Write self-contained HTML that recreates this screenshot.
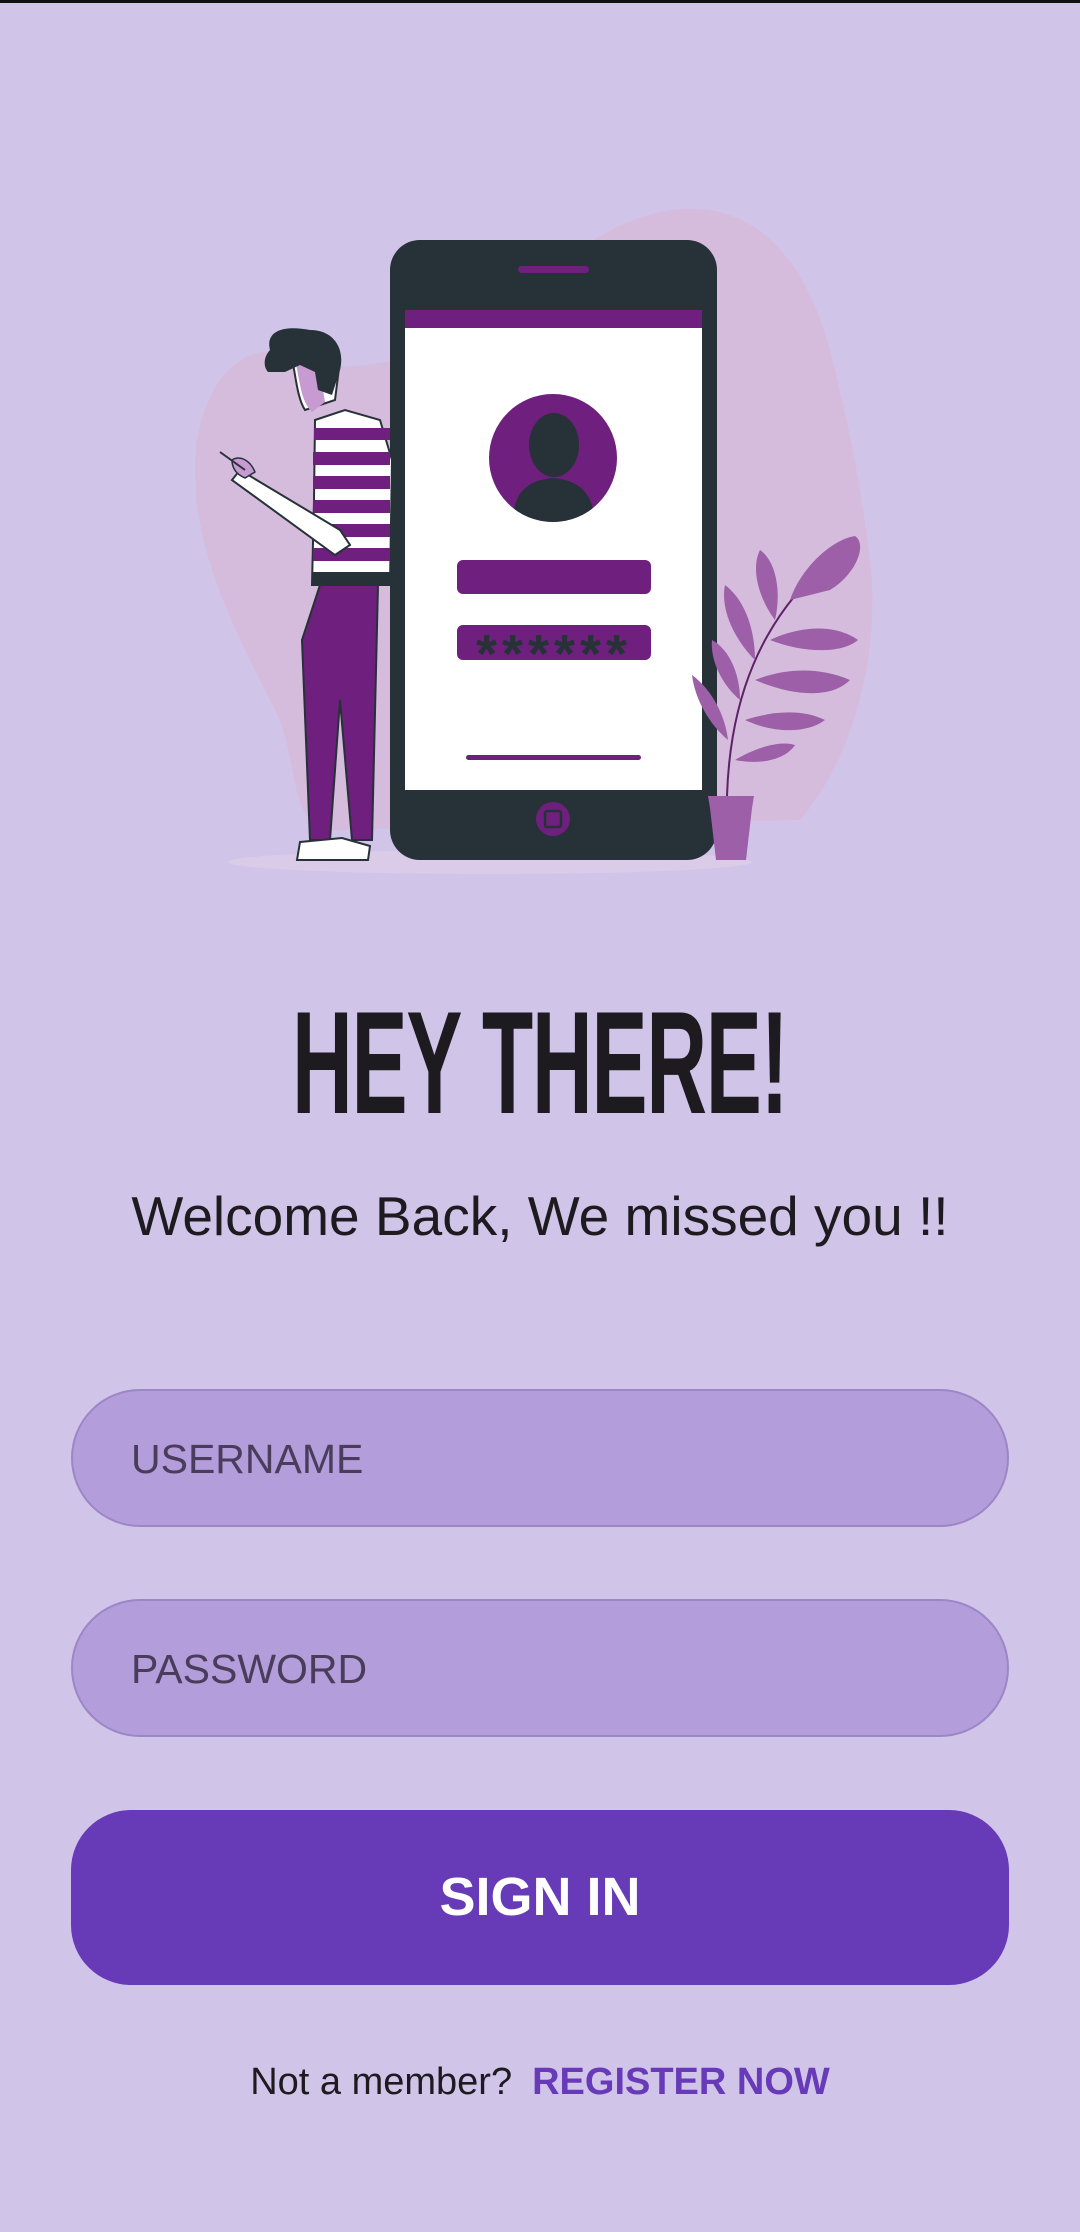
<!DOCTYPE html>
<html><head><meta charset="utf-8"><style>
html,body{margin:0;padding:0;}
body{width:1080px;height:2232px;background:#D1C4E9;position:relative;overflow:hidden;font-family:"Liberation Sans",sans-serif;}
.topbar{position:absolute;left:0;top:0;width:1080px;height:3px;background:#111;}
.title{position:absolute;left:0;width:1080px;top:990px;text-align:center;font-weight:bold;font-size:146px;line-height:146px;color:#1d1b20;}
.title span{display:inline-block;transform:scaleX(0.575);transform-origin:center;letter-spacing:-2px;}
.sub{position:absolute;left:0;width:1080px;top:1183px;text-align:center;font-size:55px;line-height:66px;color:#1d1b20;}
.field{position:absolute;left:71px;width:938px;height:138px;border:2px solid #9D86C6;border-radius:69px;background:#B39DDB;box-sizing:border-box;}
.field span{position:absolute;left:58px;top:46px;font-size:41px;line-height:44px;color:#4a3d5c;}
.btn{position:absolute;left:71px;top:1810px;width:938px;height:175px;border-radius:60px;background:#673AB7;color:#fff;text-align:center;font-weight:bold;font-size:54px;line-height:175px;}
.foot{position:absolute;left:0;width:1080px;top:2060px;text-align:center;font-size:38px;line-height:44px;color:#1d1b20;}
.foot b{color:#673AB7;margin-left:20px;}
</style></head><body>
<div class="topbar"></div>
<svg style="position:absolute;left:0;top:0" width="1080" height="900" viewBox="0 0 1080 900">
  <path d="M300 360 C250 330 195 380 195 470 C195 560 240 640 280 720 C300 780 290 820 330 830 L800 820 C860 750 880 640 870 560 C860 480 850 430 830 350 C800 240 740 200 670 210 C610 220 560 260 520 300 C460 350 360 380 300 360 Z" fill="#D5BCDC"/>
  <ellipse cx="490" cy="862" rx="262" ry="12" fill="#DACBE8"/>
  <rect x="390" y="240" width="327" height="620" rx="30" fill="#263238"/>
  <rect x="518" y="266" width="71" height="7" rx="3.5" fill="#6F1F7D"/>
  <rect x="405" y="310" width="297" height="480" fill="#fff"/>
  <rect x="405" y="310" width="297" height="18" fill="#6F1F7D"/>
  <circle cx="553" cy="458" r="64" fill="#6F1F7D"/>
  <clipPath id="cc"><circle cx="553" cy="458" r="64"/></clipPath>
  <g clip-path="url(#cc)" fill="#263238">
    <ellipse cx="554" cy="445" rx="25" ry="32"/>
    <path d="M513 522 C513 490 530 480 553 478 C576 480 593 490 595 522 Z"/>
  </g>
  <rect x="457" y="560" width="194" height="34" rx="6" fill="#6F1F7D"/>
  <rect x="457" y="625" width="194" height="35" rx="6" fill="#6F1F7D"/>
  <text x="554" y="672" text-anchor="middle" font-family="Liberation Sans" font-weight="bold" font-size="54" fill="#263238" letter-spacing="5">******</text>
  <rect x="466" y="755" width="175" height="5" rx="2.5" fill="#6F1F7D"/>
  <circle cx="553" cy="819" r="17" fill="#6F1F7D"/>
  <rect x="545" y="811" width="16" height="16" rx="2" fill="none" stroke="#263238" stroke-width="2.5"/>
  <g fill="#9C5FA8">
    <path d="M708 796 L754 796 L752 808 L746 860 L716 860 L710 808 Z"/>
    <path d="M727 796 C730 700 760 620 830 560" stroke="#5c2266" stroke-width="2" fill="none"/>
    <path d="M790 600 C800 570 830 540 855 536 C868 545 855 575 830 590 Z"/>
    <path d="M770 640 C790 630 830 620 858 640 C840 655 800 652 770 640 Z"/>
    <path d="M755 680 C780 670 815 665 850 680 C830 700 790 695 755 680 Z"/>
    <path d="M745 720 C770 712 800 708 825 720 C805 735 770 732 745 720 Z"/>
    <path d="M735 760 C755 748 780 740 795 745 C785 760 760 765 735 760 Z"/>
    <path d="M775 620 C760 600 750 570 760 550 C775 560 782 590 775 620 Z"/>
    <path d="M755 660 C735 640 720 610 725 585 C745 600 755 630 755 660 Z"/>
    <path d="M740 700 C722 685 710 660 712 640 C730 650 740 675 740 700 Z"/>
    <path d="M728 740 C710 725 695 700 692 675 C712 690 725 715 728 740 Z"/>
  </g>
  <path d="M320 585 L378 585 L372 840 L352 840 L340 700 L330 840 L310 840 L302 640 Z" fill="#6F1F7D" stroke="#263238" stroke-width="2"/>
  <path d="M300 842 L342 838 L370 846 L368 860 L297 860 Z" fill="#fff" stroke="#263238" stroke-width="2"/>
  <path d="M315 420 L345 410 L380 420 L392 460 L390 585 L312 585 L314 500 Z" fill="#fff" stroke="#263238" stroke-width="2"/>
  <g fill="#6F1F7D">
    <rect x="314" y="428" width="76" height="12"/>
    <rect x="313" y="452" width="77" height="13"/>
    <rect x="313" y="476" width="77" height="13"/>
    <rect x="313" y="500" width="77" height="13"/>
    <rect x="313" y="524" width="77" height="13"/>
    <rect x="313" y="548" width="77" height="13"/>
  </g>
  <rect x="312" y="572" width="78" height="13" fill="#263238"/>
  <path d="M240 470 L340 530 L350 545 L335 555 L232 480 Z" fill="#fff" stroke="#263238" stroke-width="2"/>
  <path d="M232 460 C240 455 250 460 255 472 L245 478 C238 475 232 470 232 460 Z" fill="#C79BD2" stroke="#263238" stroke-width="1.5"/>
  <line x1="220" y1="452" x2="245" y2="470" stroke="#263238" stroke-width="2"/>
  <path d="M288 345 C295 360 295 395 305 410 L335 400 L340 360 Z" fill="#fff" stroke="#263238" stroke-width="2"/>
  <path d="M295 360 C300 380 300 400 312 412 L325 402 L318 360 Z" fill="#C79BD2"/>
  <path d="M270 350 C265 330 285 325 310 330 C335 330 345 350 340 370 L332 395 L318 390 L315 372 L300 365 L285 372 L268 372 C262 365 265 355 270 350 Z" fill="#263238"/>
</svg>
<div class="title"><span>HEY THERE!</span></div>
<div class="sub">Welcome Back, We missed you !!</div>
<div class="field" style="top:1389px"><span>USERNAME</span></div>
<div class="field" style="top:1599px"><span>PASSWORD</span></div>
<div class="btn">SIGN IN</div>
<div class="foot">Not a member?<b>REGISTER NOW</b></div>
</body></html>
